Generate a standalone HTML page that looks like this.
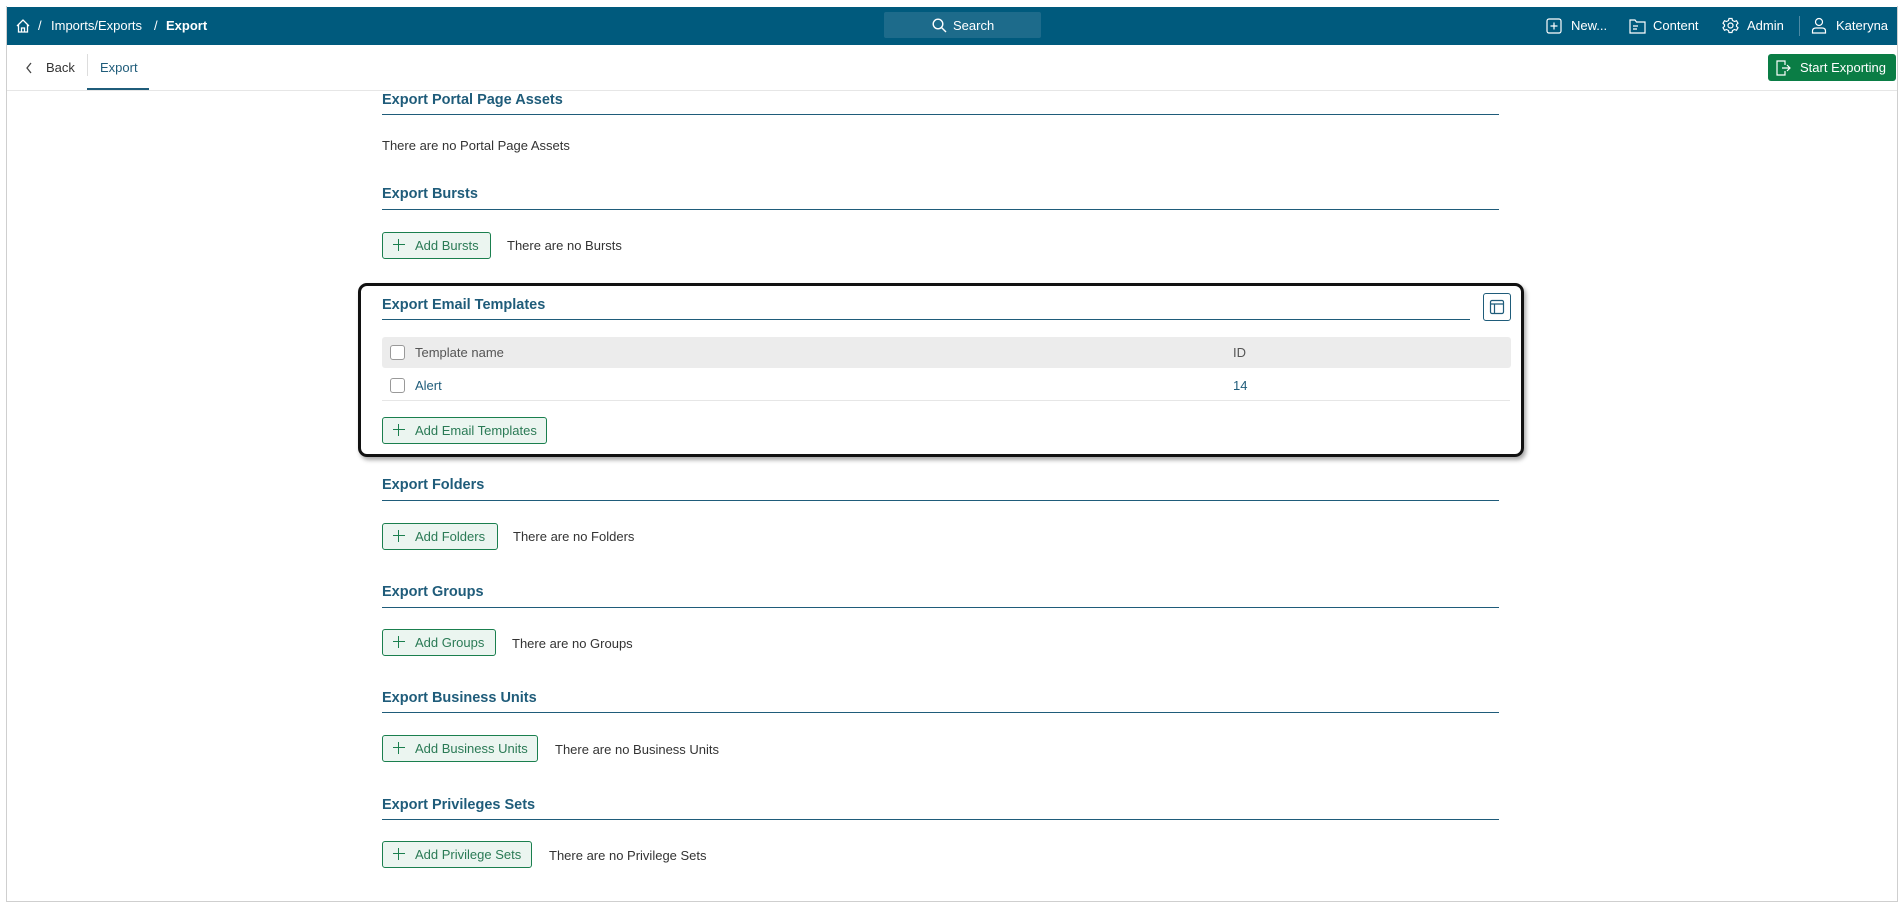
<!DOCTYPE html>
<html><head><meta charset="utf-8">
<style>
*{box-sizing:border-box;margin:0;padding:0}
body{width:1903px;height:904px;background:#fff;font-family:"Liberation Sans",sans-serif;position:relative;overflow:hidden;color:#333}
.frame{position:absolute;left:6px;top:6px;width:1892px;height:896px;border:1px solid #cfcfcf;border-top:none}
.top{position:absolute;left:7px;top:7px;width:1890px;height:38px;background:#005a7d;color:#fff;font-size:13px}
.top span{position:absolute;top:11px;white-space:nowrap}
.a{position:absolute;white-space:nowrap}
.h{position:absolute;left:382px;font-size:14.5px;font-weight:bold;color:#1f5c7a}
.line{position:absolute;left:382px;width:1117px;height:1px;background:#1f5c7a}
.btn{position:absolute;left:382px;height:27px;border:1px solid #1a7f4e;border-radius:3px;background:#ebf5f0;color:#2a7a55;font-size:13px;line-height:25px;padding-left:32px}
.btn:before{content:"";position:absolute;left:10px;top:6px;width:12px;height:12px;background:linear-gradient(#1a7f4e,#1a7f4e) center/12px 1.3px no-repeat,linear-gradient(#1a7f4e,#1a7f4e) center/1.3px 12px no-repeat}
.t{position:absolute;font-size:13px;color:#333}
.cb{position:absolute;width:15px;height:15px;border:1px solid #999;border-radius:3px;background:#fff}
</style></head><body>
<div class="frame"></div>
<div class="top">
<svg style="position:absolute;left:8px;top:11px" width="16" height="16" viewBox="0 0 16 16" fill="none" stroke="#fff" stroke-width="1.3"><path d="M2 8 L8 2 L14 8 M3.5 6.5 V14 H12.5 V6.5 M6.5 14 V10 H9.5 V14"/></svg>
<span style="left:31px">/</span>
<span style="left:44px">Imports/Exports</span>
<span style="left:147px">/</span>
<span style="left:159px;font-weight:bold">Export</span>
<div style="position:absolute;left:877px;top:5px;width:157px;height:26px;background:#1d6b8b;border-radius:2px"></div>
<svg style="position:absolute;left:925px;top:11px" width="15" height="15" viewBox="0 0 15 15" fill="none" stroke="#fff" stroke-width="1.4"><circle cx="6" cy="6" r="4.8"/><path d="M9.5 9.5 L14 14"/></svg>
<span style="left:946px">Search</span>
<svg style="position:absolute;left:1539px;top:11px" width="16" height="16" viewBox="0 0 16 16" fill="none" stroke="#fff" stroke-width="1.2"><rect x="1" y="1" width="14" height="14" rx="2"/><path d="M8 4.5V11.5M4.5 8H11.5"/></svg>
<span style="left:1564px">New...</span>
<svg style="position:absolute;left:1622px;top:11px" width="17" height="16" viewBox="0 0 17 16" fill="none" stroke="#fff" stroke-width="1.2"><path d="M1 2H6L7.5 4H16V15H1Z M4 8H9 M4 11H8"/></svg>
<span style="left:1646px">Content</span>
<svg style="position:absolute;left:1715px;top:10px" width="17" height="17" viewBox="0 0 17 17" fill="none" stroke="#fff" stroke-width="1.2"><circle cx="8.5" cy="8.5" r="2.5"/><path d="M7 1.5H10L10.5 3.5 12.5 4.5 14.5 3.7 16 6.3 14.5 7.7V9.3L16 10.7 14.5 13.3 12.5 12.5 10.5 13.5 10 15.5H7L6.5 13.5 4.5 12.5 2.5 13.3 1 10.7 2.5 9.3V7.7L1 6.3 2.5 3.7 4.5 4.5 6.5 3.5Z"/></svg>
<span style="left:1740px">Admin</span>
<div style="position:absolute;left:1792px;top:9px;width:1px;height:20px;background:#4d8aa5"></div>
<svg style="position:absolute;left:1804px;top:10px" width="16" height="17" viewBox="0 0 16 17" fill="none" stroke="#fff" stroke-width="1.2"><circle cx="8" cy="5" r="3.5"/><path d="M1.5 16V14C1.5 12 3 11 5 11H11C13 11 14.5 12 14.5 14V16Z"/></svg>
<span style="left:1829px">Kateryna</span>
</div>
<svg style="position:absolute;left:25px;top:62px" width="8" height="12" viewBox="0 0 8 12" fill="none" stroke="#444" stroke-width="1.3"><path d="M6 1L2 6 6 11"/></svg>
<div class="a" style="left:46px;top:60px;font-size:13px;color:#333">Back</div>
<div style="position:absolute;left:87px;top:54px;width:1px;height:22px;background:#ddd"></div>
<div class="a" style="left:100px;top:60px;font-size:13px;color:#1f5c7a">Export</div>
<div style="position:absolute;left:87px;top:88px;width:62px;height:2px;background:#1f5c7a"></div>
<div style="position:absolute;left:7px;top:90px;width:1890px;height:1px;background:#e6e6e6"></div>
<div style="position:absolute;left:1768px;top:54px;width:128px;height:27px;background:#0a7d45;border-radius:3px;color:#fff;font-size:13px;line-height:27px;padding-left:32px">Start Exporting</div>
<svg style="position:absolute;left:1776px;top:60px" width="15" height="16" viewBox="0 0 15 16" fill="none" stroke="#fff" stroke-width="1.2"><path d="M9 5V1H1V15H9V11 M6 8H14 M11 5L14 8 11 11"/></svg>

<div class="h" style="top:92px">Export Portal Page Assets</div>
<div class="line" style="top:114px"></div>
<div class="t" style="left:382px;top:138px">There are no Portal Page Assets</div>

<div class="h" style="top:186px">Export Bursts</div>
<div class="line" style="top:209px"></div>
<div class="btn" style="top:232px;width:109px">Add Bursts</div>
<div class="t" style="left:507px;top:238px">There are no Bursts</div>

<div style="position:absolute;left:358px;top:283px;width:1166px;height:174px;border:3px solid #111;border-radius:9px;box-shadow:2px 3px 4px rgba(0,0,0,.35)"></div>
<div class="h" style="top:297px">Export Email Templates</div>
<div class="line" style="top:319px;width:1088px"></div>
<div style="position:absolute;left:1483px;top:293px;width:28px;height:28px;border:1px solid #1f5c7a;border-radius:3px"></div>
<svg style="position:absolute;left:1489px;top:299px" width="16" height="16" viewBox="0 0 16 16" fill="none" stroke="#1f5c7a" stroke-width="1.2"><rect x="1.5" y="1.5" width="13" height="13" rx="1.5"/><path d="M1.5 5H14.5M5.5 5V14.5"/></svg>
<div style="position:absolute;left:382px;top:337px;width:1129px;height:31px;background:#ececec;border-radius:3px"></div>
<div class="cb" style="left:390px;top:345px"></div>
<div class="t" style="left:415px;top:345px;color:#555">Template name</div>
<div class="t" style="left:1233px;top:345px;color:#555">ID</div>
<div class="cb" style="left:390px;top:378px"></div>
<div class="t" style="left:415px;top:378px;color:#1f5c7a">Alert</div>
<div class="t" style="left:1233px;top:378px;color:#1f5c7a">14</div>
<div style="position:absolute;left:382px;top:400px;width:1128px;height:1px;background:#e6e6e6"></div>
<div class="btn" style="top:417px;width:165px">Add Email Templates</div>

<div class="h" style="top:477px">Export Folders</div>
<div class="line" style="top:500px"></div>
<div class="btn" style="top:523px;width:116px">Add Folders</div>
<div class="t" style="left:513px;top:529px">There are no Folders</div>

<div class="h" style="top:584px">Export Groups</div>
<div class="line" style="top:607px"></div>
<div class="btn" style="top:629px;width:114px">Add Groups</div>
<div class="t" style="left:512px;top:636px">There are no Groups</div>

<div class="h" style="top:690px">Export Business Units</div>
<div class="line" style="top:712px"></div>
<div class="btn" style="top:735px;width:156px">Add Business Units</div>
<div class="t" style="left:555px;top:742px">There are no Business Units</div>

<div class="h" style="top:797px">Export Privileges Sets</div>
<div class="line" style="top:819px"></div>
<div class="btn" style="top:841px;width:150px">Add Privilege Sets</div>
<div class="t" style="left:549px;top:848px">There are no Privilege Sets</div>
</body></html>
